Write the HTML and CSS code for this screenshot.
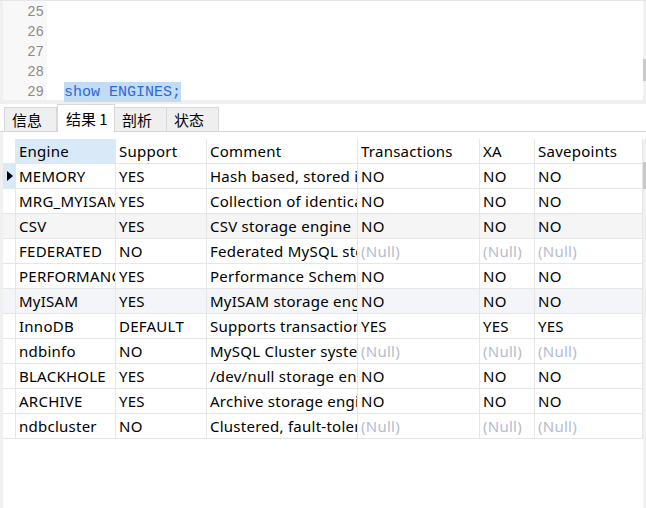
FILE: index.html
```html
<!DOCTYPE html>
<html>
<head>
<meta charset="utf-8">
<link rel="stylesheet" href="styles.css">
</head>
<body>
<div class="editor">
  <div class="strip"></div>
  <div class="gutter">
    <div class="ln">25</div>
    <div class="ln">26</div>
    <div class="ln">27</div>
    <div class="ln">28</div>
    <div class="ln">29</div>
  </div>
  <div class="code">
    <div class="cl"></div>
    <div class="cl"></div>
    <div class="cl"></div>
    <div class="cl"></div>
    <div class="cl"><span class="sel">show ENGINES;</span></div>
  </div>
  <div class="vscroll"><div class="thumb ed-thumb"></div></div>
</div>
<div class="splitter"></div>
<div class="tabs">
  <div class="tab t1">信息</div>
  <div class="tab active t2">结果 1</div>
  <div class="tab t3">剖析</div>
  <div class="tab t4">状态</div>
</div>
<div class="results">
  <div class="strip"></div>
  <div class="gridwrap">
    <div class="grid">
      <div class="c rh hd"></div>
      <div class="c hd focus">Engine</div>
      <div class="c hd">Support</div>
      <div class="c hd">Comment</div>
      <div class="c hd">Transactions</div>
      <div class="c hd">XA</div>
      <div class="c hd">Savepoints</div>

      <div class="c rh cur"><span class="tri"></span></div>
      <div class="c">MEMORY</div><div class="c">YES</div><div class="c">Hash based, stored in memory, useful for temporary tables</div><div class="c">NO</div><div class="c">NO</div><div class="c">NO</div>

      <div class="c rh"></div>
      <div class="c">MRG_MYISAM</div><div class="c">YES</div><div class="c">Collection of identical MyISAM tables</div><div class="c">NO</div><div class="c">NO</div><div class="c">NO</div>

      <div class="c rh alt"></div>
      <div class="c alt">CSV</div><div class="c alt">YES</div><div class="c alt">CSV storage engine</div><div class="c alt">NO</div><div class="c alt">NO</div><div class="c alt">NO</div>

      <div class="c rh"></div>
      <div class="c">FEDERATED</div><div class="c">NO</div><div class="c">Federated MySQL storage engine</div><div class="c null">(Null)</div><div class="c null">(Null)</div><div class="c null">(Null)</div>

      <div class="c rh"></div>
      <div class="c">PERFORMANCE_SCHEMA</div><div class="c">YES</div><div class="c">Performance Schema</div><div class="c">NO</div><div class="c">NO</div><div class="c">NO</div>

      <div class="c rh alt2"></div>
      <div class="c alt2">MyISAM</div><div class="c alt2">YES</div><div class="c alt2">MyISAM storage engine</div><div class="c alt2">NO</div><div class="c alt2">NO</div><div class="c alt2">NO</div>

      <div class="c rh"></div>
      <div class="c">InnoDB</div><div class="c">DEFAULT</div><div class="c">Supports transactions, row-level locking, and foreign keys</div><div class="c">YES</div><div class="c">YES</div><div class="c">YES</div>

      <div class="c rh"></div>
      <div class="c">ndbinfo</div><div class="c">NO</div><div class="c">MySQL Cluster system information storage engine</div><div class="c null">(Null)</div><div class="c null">(Null)</div><div class="c null">(Null)</div>

      <div class="c rh"></div>
      <div class="c">BLACKHOLE</div><div class="c">YES</div><div class="c">/dev/null storage engine (anything you write to it disappears)</div><div class="c">NO</div><div class="c">NO</div><div class="c">NO</div>

      <div class="c rh"></div>
      <div class="c">ARCHIVE</div><div class="c">YES</div><div class="c">Archive storage engine</div><div class="c">NO</div><div class="c">NO</div><div class="c">NO</div>

      <div class="c rh"></div>
      <div class="c">ndbcluster</div><div class="c">NO</div><div class="c">Clustered, fault-tolerant tables</div><div class="c null">(Null)</div><div class="c null">(Null)</div><div class="c null">(Null)</div>
    </div>
    <div class="vscroll gscroll"><div class="thumb g-thumb"></div></div>
  </div>
</div>
</body>
</html>
```
FILE: styles.css
```css
* { box-sizing: border-box; }
html, body { margin: 0; padding: 0; }
body {
  width: 646px;
  height: 508px;
  overflow: hidden;
  background: #ffffff;
  font-family: "Noto Sans", "Noto Sans CJK SC", sans-serif;
  color: #000;
}
.editor {
  height: 100px;
  border-top: 1px solid #e6e6e6;
  display: flex;
  background: #fff;
}
.strip {
  width: 3px;
  background: #f0f0f0;
  flex: none;
}
.gutter {
  width: 44px;
  background: #f8f8f8;
  padding-top: 1px;
  flex: none;
}
.ln {
  height: 20px;
  line-height: 20px;
  text-align: right;
  padding-right: 3px;
  font-family: "Liberation Mono", monospace;
  font-size: 14px;
  color: #8c8c8c;
}
.code {
  flex: 1;
  padding-top: 1px;
  padding-left: 17px;
}
.cl {
  height: 20px;
  line-height: 20px;
  font-family: "Liberation Mono", monospace;
  font-size: 15px;
  white-space: pre;
}
.sel {
  background: #c2dcf6;
  color: #2f68d8;
  display: inline-block;
  height: 20px;
  line-height: 21px;
}
.vscroll {
  width: 3px;
  background: #f0f0f0;
  flex: none;
  position: relative;
}
.thumb {
  position: absolute;
  left: 0;
  width: 3px;
  background: #c9c9c9;
}
.ed-thumb { top: 58px; height: 22px; }
.splitter {
  height: 4px;
  background: #efefef;
}
.tabs {
  height: 28px;
  display: flex;
  align-items: flex-end;
  padding-left: 4px;
  border-bottom: 1px solid #d6d6d6;
  background: #fff;
}
.tab {
  height: 24px;
  line-height: 24px;
  padding: 0 7px;
  background: #efefef;
  border: 1px solid #d8d8d8;
  border-bottom: none;
  font-family: "Noto Sans CJK SC", sans-serif;
  font-size: 15px;
  color: #000;
  white-space: nowrap;
}
.tab + .tab { border-left: none; }
.t1 { width: 53px; }
.t2 { width: 58px; }
.t3 { width: 52px; }
.t4 { width: 52px; }
.tab.active {
  height: 28px;
  line-height: 27px;
  background: #fff;
  margin-bottom: -1px;
  padding-left: 8px;
  border-left: 1px solid #d8d8d8;
  border-right: 1px solid #d8d8d8;
}
.tab.active + .tab { border-left: none; }
.results {
  display: flex;
  height: 376px;
}
.gridwrap {
  flex: 1;
  display: flex;
  padding-top: 7px;
}
.grid {
  display: grid;
  grid-template-columns: 13px 100px 91px 151px 122px 55px 108px;
  grid-auto-rows: 25px;
  align-content: start;
  width: 640px;
}
.c {
  border-right: 1px solid #e6e6e6;
  border-bottom: 1px solid #e6e6e6;
  padding-left: 3px;
  font-size: 15px;
  letter-spacing: 0.25px;
  line-height: 24px;
  white-space: nowrap;
  overflow: hidden;
  text-overflow: clip;
  color: #000;
}
.hd { background: #fff; }
.focus { background: #d9e9f8; }
.rh { padding: 0; position: relative; }
.cur { background: #d9e9f8; }
.tri {
  position: absolute;
  left: 4px;
  top: 7px;
  width: 0;
  height: 0;
  border-top: 5px solid transparent;
  border-bottom: 5px solid transparent;
  border-left: 6px solid #000;
}
.alt { background: #f5f5f5; }
.alt2 { background: #f3f5f8; }
.null { color: #b4bccf; }
.gscroll {
  height: 369px;
}
.g-thumb { top: 23px; height: 27px; }
```
